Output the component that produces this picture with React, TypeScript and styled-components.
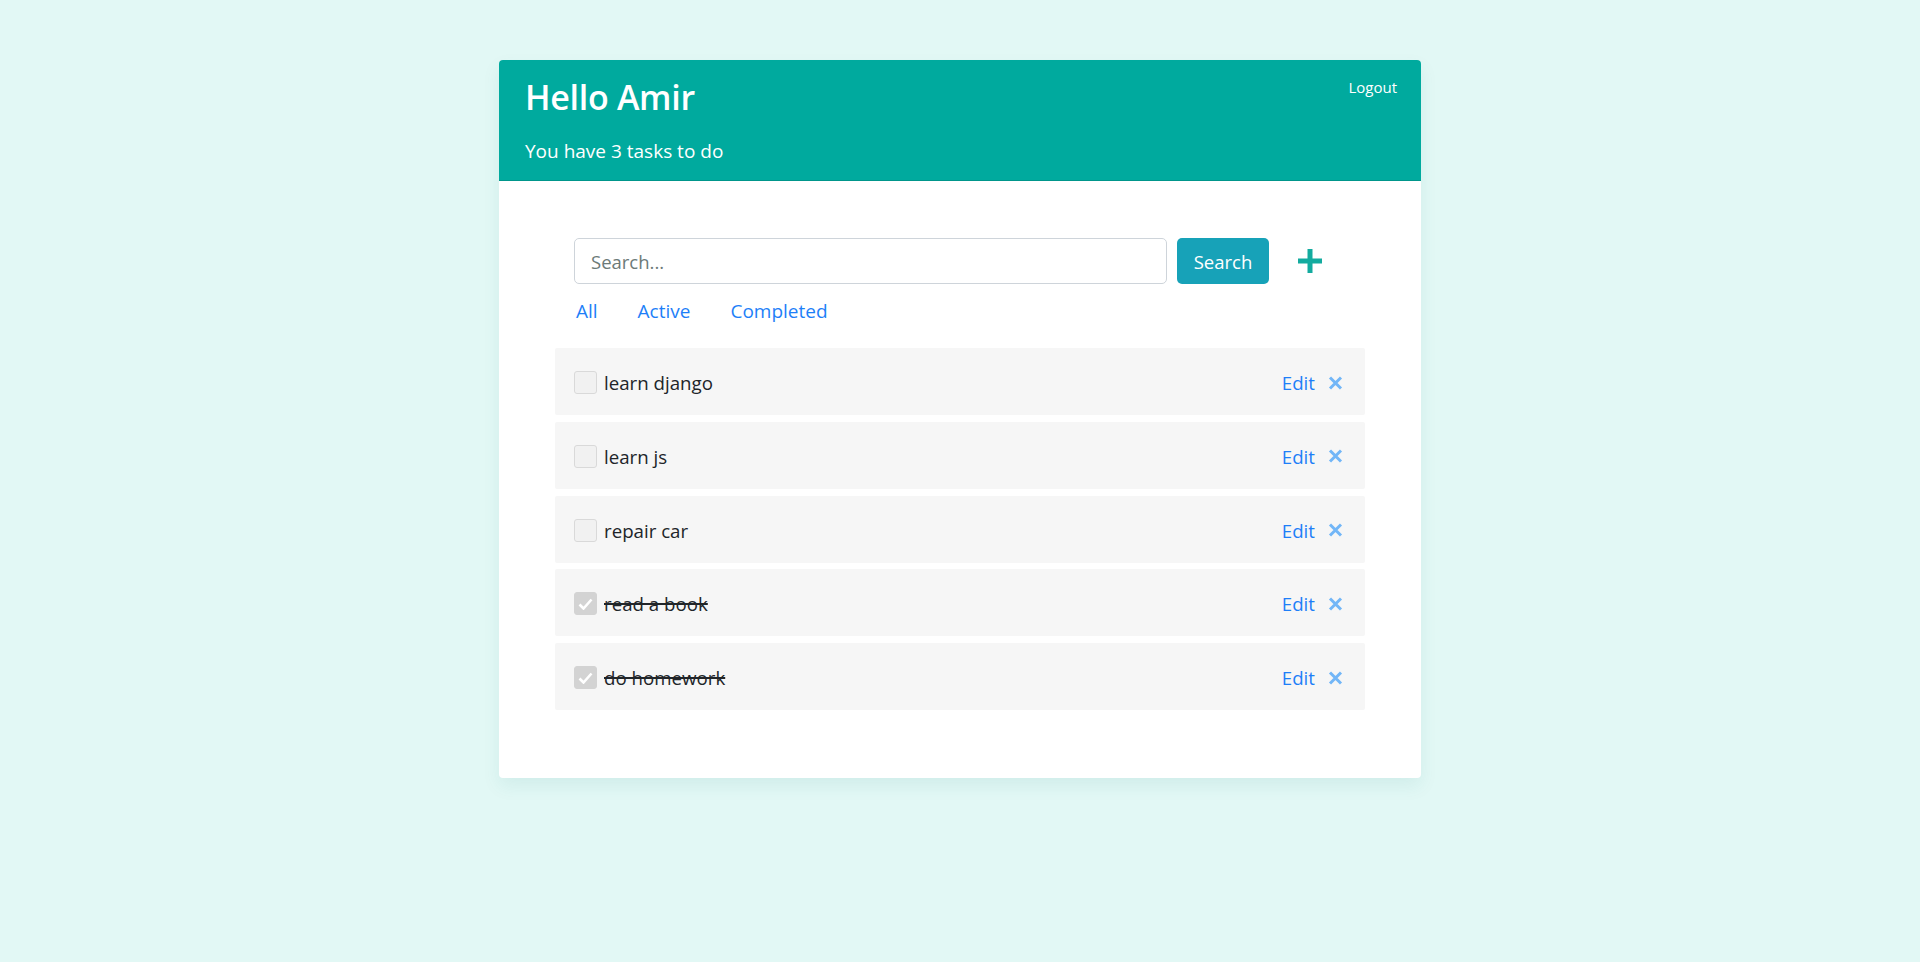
import React, { useState } from 'react'
import styled, { createGlobalStyle } from 'styled-components'

const GlobalStyle = createGlobalStyle`
  body {
    margin: 0;
    background: #e2f8f5;
    font-family: 'Open Sans', 'Noto Sans', sans-serif;
    color: #212529;
  }
`

const Page = styled.div`
  min-height: 962px;
  display: flex;
  justify-content: center;
  align-items: flex-start;
  padding-top: 60px;
  box-sizing: border-box;
`

const Card = styled.div`
  width: 922px;
  background: #ffffff;
  border-radius: 4px;
  box-shadow: 0 8px 18px rgba(0, 120, 110, 0.08);
  overflow: hidden;
`

const Header = styled.header`
  height: 121px;
  box-sizing: border-box;
  background: #00aa9e;
  border-bottom: 1px solid #00968b;
  color: #ffffff;
  display: flex;
  justify-content: space-between;
  align-items: flex-start;
  padding: 17px 24px 0 26px;
`

const Greeting = styled.div`
  display: flex;
  flex-direction: column;
`

const Title = styled.h1`
  margin: 0;
  font-size: 34px;
  font-weight: 600;
  line-height: 1.2;
  letter-spacing: -0.3px;
`

const Subtitle = styled.p`
  margin: 19px 0 0;
  font-size: 19px;
  line-height: 1.5;
`

const Logout = styled.a`
  margin-top: 0;
  font-size: 15px;
  color: #ffffff;
  cursor: pointer;
`

const Body = styled.div`
  padding: 57px 56px 68px;
`

const SearchRow = styled.form`
  display: flex;
  align-items: center;
  padding: 0 43px 0 19px;
`

const SearchInput = styled.input`
  flex: 1;
  height: 46px;
  box-sizing: border-box;
  border: 1px solid #ced4da;
  border-radius: 5px;
  padding: 0 16px;
  font-family: inherit;
  font-size: 18.5px;
  color: #495057;
  outline: none;
  &::placeholder {
    color: #6c7a78;
  }
`

const SearchButton = styled.button`
  margin-left: 10px;
  width: 92px;
  height: 46px;
  border: none;
  border-radius: 5px;
  background: #17a2b8;
  color: #ffffff;
  font-family: inherit;
  font-size: 18.5px;
  cursor: pointer;
`

const AddButton = styled.button`
  margin-left: 29px;
  padding: 0;
  border: none;
  background: none;
  display: flex;
  cursor: pointer;
`

const Filters = styled.nav`
  display: flex;
  gap: 40px;
  padding-left: 21px;
  margin: 12px 0 22px;
`

const FilterLink = styled.a`
  font-size: 19px;
  line-height: 30px;
  color: #1e7ff8;
  cursor: pointer;
`

const List = styled.ul`
  list-style: none;
  margin: 0;
  padding: 0;
  display: flex;
  flex-direction: column;
  gap: 6.75px;
`

const Row = styled.li`
  height: 67px;
  background: #f6f6f6;
  border-radius: 2px;
  display: flex;
  align-items: center;
  padding: 2px 22px 0 19px;
  box-sizing: border-box;
`

const Check = styled.span<{ checked: boolean }>`
  width: 23px;
  height: 23px;
  box-sizing: border-box;
  border-radius: 3px;
  border: 1px solid ${p => (p.checked ? '#d3d3d3' : '#d9d9d9')};
  background: ${p => (p.checked ? '#d3d3d3' : '#f1f1f1')};
  display: flex;
  align-items: center;
  justify-content: center;
  flex-shrink: 0;
`

const TaskText = styled.span<{ done: boolean }>`
  margin-left: 7px;
  font-size: 18.7px;
  color: #212529;
  text-decoration: ${p => (p.done ? 'line-through' : 'none')};
  text-decoration-thickness: 2px;
  flex: 1;
`

const EditLink = styled.a`
  font-size: 18.7px;
  color: #1e7ff8;
  cursor: pointer;
`

const RemoveButton = styled.button`
  margin-left: 13px;
  padding: 0;
  border: none;
  background: none;
  display: flex;
  cursor: pointer;
`

const tasks = [
  { id: 1, title: 'learn django', done: false },
  { id: 2, title: 'learn js', done: false },
  { id: 3, title: 'repair car', done: false },
  { id: 4, title: 'read a book', done: true },
  { id: 5, title: 'do homework', done: true },
]

function App() {
  const [query, setQuery] = useState('')
  const left = tasks.filter(t => !t.done).length

  return (
    <Page>
      <GlobalStyle />
      <Card>
        <Header>
          <Greeting>
            <Title>Hello Amir</Title>
            <Subtitle>You have {left} tasks to do</Subtitle>
          </Greeting>
          <Logout>Logout</Logout>
        </Header>
        <Body>
          <SearchRow onSubmit={e => e.preventDefault()}>
            <SearchInput
              placeholder="Search..."
              value={query}
              onChange={e => setQuery(e.target.value)}
            />
            <SearchButton type="submit">Search</SearchButton>
            <AddButton type="button" aria-label="add">
              <svg width="24" height="24" viewBox="0 0 24 24">
                <path d="M12 0v24M0 12h24" stroke="#13ab9f" strokeWidth="5" />
              </svg>
            </AddButton>
          </SearchRow>
          <Filters>
            <FilterLink>All</FilterLink>
            <FilterLink>Active</FilterLink>
            <FilterLink>Completed</FilterLink>
          </Filters>
          <List>
            {tasks.map(t => (
              <Row key={t.id}>
                <Check checked={t.done}>
                  {t.done && (
                    <svg width="15" height="12" viewBox="0 0 15 12">
                      <path
                        d="M1.5 6.5l4 4L13.5 1.5"
                        fill="none"
                        stroke="#ffffff"
                        strokeWidth="2.6"
                      />
                    </svg>
                  )}
                </Check>
                <TaskText done={t.done}>{t.title}</TaskText>
                <EditLink>Edit</EditLink>
                <RemoveButton type="button" aria-label="remove">
                  <svg width="15" height="14" viewBox="0 0 15 14">
                    <path
                      d="M2 1.5l11 11M13 1.5l-11 11"
                      stroke="#72b6f7"
                      strokeWidth="3"
                    />
                  </svg>
                </RemoveButton>
              </Row>
            ))}
          </List>
        </Body>
      </Card>
    </Page>
  )
}

export default App
